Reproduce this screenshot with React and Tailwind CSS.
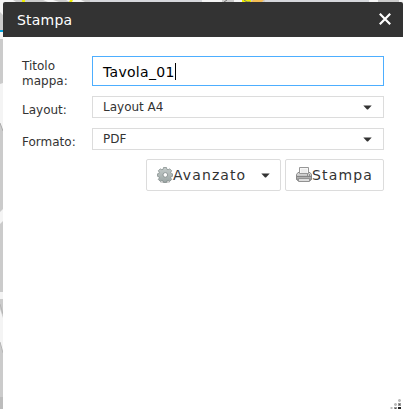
function MapBackdrop() {
  return (
    <svg className="absolute inset-0" width="403" height="409" viewBox="0 0 403 409" aria-hidden="true">
      <rect width="403" height="409" fill="#cbcbcb" />
      <path d="M0 0h13l3 2-4 4H3v9L0 12z" fill="#f4f4f4" />
      <path d="M43 0h10l6 2H48zM66 0h15l4 2H70zM202 0h20v2h-22zM234 0h17v2h-17zM369 0h9v2h-9zM399 0h4v9l-4-5z" fill="#f5f5f5" />
      <path d="M90 0h112v2H90zM265 0h104v2H265z" fill="#d6d8dc" />
      <path d="M22 0h3v2h-3zM70 0h3l-1 2h-3zM242 0h9v2h-9z" fill="#eeee00" />
      <path d="M253 0h11l-2 2h-11z" fill="#f5bd55" />
      <path d="M244 0l3 2h3M227 0l-3 2" stroke="#777" fill="none" />
      <rect y="30" width="3" height="2" fill="#00a5df" />
      <rect y="32" width="3" height="7" fill="#f4f4f4" />
      <path d="M0 84l3-1v48l-3-8z" fill="#f4f4f4" />
      <path d="M0 123l3 8" stroke="#aaa" />
      <path d="M0 212l3-3v12l-3 3z" fill="#f4f4f4" />
      <path d="M0 292h3v7H0zM0 309l3 9v35l-3-11z" fill="#f4f4f4" />
      <path d="M0 304l3 10M0 342l3 11" stroke="#b5b5b5" />
      <rect y="397" width="3" height="12" fill="#bcbcbc" />
    </svg>
  );
}

function Arrow() {
  return (
    <svg className="shrink-0" width="9" height="5" viewBox="0 0 9 5" aria-hidden="true">
      <path d="M.3.6h8.4L5 4.6H4z" fill="#333" />
    </svg>
  );
}

function GearIcon() {
  return (
    <svg className="shrink-0" width="16" height="16" viewBox="0 0 16 16" aria-hidden="true">
      <defs>
        <linearGradient id="gear" x2="0" y2="1">
          <stop stopColor="#c4cbca" />
          <stop offset="1" stopColor="#9ca6a5" />
        </linearGradient>
      </defs>
      <ellipse cx="8" cy="15" rx="5" ry="1" fill="#ccc" />
      <path
        d="M6.5.5h3l.4 1.8 1.2.5 1.6-1 2 2-1 1.5.5 1.2 1.5.4v2.3l-1.5.4-.5 1.3 1 1.5-2 2-1.6-1-1.2.5-.4 1.5h-3l-.4-1.5-1.2-.5-1.6 1-2-2 1-1.5-.5-1.3-1.5-.4V6.9l1.5-.4.5-1.2-1-1.5 2-2 1.6 1 1.2-.5z"
        fill="url(#gear)"
        stroke="#7b8584"
        strokeWidth=".7"
      />
      <circle cx="8.3" cy="7.9" r="2.3" fill="#fff" stroke="#7d8786" strokeWidth=".8" />
    </svg>
  );
}

function PrinterIcon() {
  return (
    <svg className="shrink-0" width="16" height="16" viewBox="0 0 16 16" aria-hidden="true">
      <defs>
        <linearGradient id="printer" x2="0" y2="1">
          <stop stopColor="#e2e2e2" />
          <stop offset=".5" stopColor="#bebebe" />
          <stop offset="1" stopColor="#858585" />
        </linearGradient>
      </defs>
      <path d="M2 5.5h12l1.5 2v5l-1 1h-13l-1-1v-5z" fill="url(#printer)" stroke="#888" />
      <path d="M3.5 .5h9v6h-9z" fill="#f7f7f7" stroke="#979797" />
      <path d="M5 2h6v4H5z" fill="#ececec" />
      <path d="M1 9.5h14" stroke="#858585" />
      <path d="M11 8h1m1 0h1" stroke="#555" />
      <path d="M2.5 11.5h11v3h-11z" fill="#ddd" stroke="#929292" />
    </svg>
  );
}

function Select({ value }) {
  return (
    <div className="flex h-[22px] w-[292px] items-center justify-between border border-[#dcdcdc] bg-white pr-[11px] pl-2.5">
      <span className="text-[12px] leading-[18px]">{value}</span>
      <Arrow />
    </div>
  );
}

export default function App() {
  return (
    <div className="relative h-[409px] w-[403px] overflow-hidden font-['DejaVu_Sans',sans-serif] text-[#333]">
      <MapBackdrop />
      <div className="relative flex h-full flex-col pt-0.5 pl-[3px]">
        <header className="flex h-[35px] shrink-0 items-center justify-between rounded-t-[2px] bg-[#333] pr-3 pl-3.5 text-white">
          <h1 className="text-[14px] leading-5 tracking-[.2px]">Stampa</h1>
          <button className="pb-px" aria-label="Chiudi">
            <svg width="12" height="12" viewBox="0 0 12 12" aria-hidden="true">
              <path d="M.8.8l10.4 10.4M11.2.8L.8 11.2" stroke="#fff" strokeWidth="2.2" />
            </svg>
          </button>
        </header>
        <main className="flex-1 bg-white pt-[19px] pl-[19px]">
          <div className="flex h-[30px] items-center">
            <label className="w-[70px] pt-[5px] text-[12px] leading-[15px]">
              Titolo
              <br />
              mappa:
            </label>
            <div className="flex h-[30px] w-[292px] items-center border border-[#4daeff] pt-[3px] pl-2.5 text-[14px] leading-[17px] text-black">
              <span className="tracking-[.3px]">Tavola_01</span>
              <span className="mb-0.5 h-[17px] w-px bg-black" />
            </div>
          </div>
          <div className="mt-2.5 flex h-[22px] items-center">
            <label className="w-[70px] pt-[5px] text-[12px] leading-4">Layout:</label>
            <Select value="Layout A4" />
          </div>
          <div className="mt-2.5 flex h-[22px] items-center">
            <label className="w-[70px] pt-[5px] text-[12px] leading-4">Formato:</label>
            <Select value="PDF" />
          </div>
          <div className="mt-[9px] ml-[124px] flex gap-1 text-[14px]">
            <button className="flex h-8 w-[135px] items-center rounded-[2px] border border-[#dcdcdc] pl-2.5">
              <GearIcon />
              <span className="w-[88px] text-left tracking-[1.1px]">Avanzato</span>
              <Arrow />
            </button>
            <button className="flex h-8 w-[99px] items-center rounded-[2px] border border-[#dcdcdc] pl-2.5">
              <PrinterIcon />
              <span className="tracking-[1.15px]">Stampa</span>
            </button>
          </div>
        </main>
        <svg className="absolute right-0 bottom-0" width="13" height="10" viewBox="0 0 13 10" aria-hidden="true">
          <path d="M8 0h3v3H8zM4 4h3v3H4zM0 8h3v2H0z" fill="#ddd" />
          <path d="M9 0h1v3H9zM8 1h3v1H8zM5 4h1v3H5zM4 5h3v1H4zM1 8h1v2H1z" fill="#bbb" />
          <path d="M8 4h3v3H8zM4 8h3v2H4z" fill="#999" />
          <path d="M9 5h1v1H9zM5 9h1v1H5z" fill="#555" />
          <path d="M8 8h3v2H8z" fill="#222" />
        </svg>
      </div>
    </div>
  );
}
